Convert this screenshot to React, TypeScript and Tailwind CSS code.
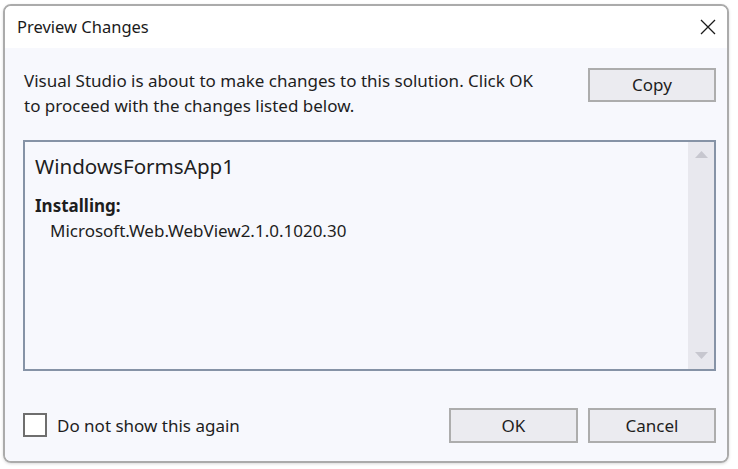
import React from "react";

export default function App() {
  const font = { fontFamily: '"Noto Sans", "Open Sans", sans-serif' };
  return (
    <div className="w-[738px] h-[469px] bg-white overflow-hidden" style={font}>
      <div className="ml-[3px] mt-[4px] w-[726px] h-[459px] border-2 border-[#ababab] rounded-[8px] overflow-hidden flex flex-col shadow-[0_1px_3px_rgba(0,0,0,0.15)]">
        {/* Title bar */}
        <div className="h-[42px] bg-white flex items-center justify-between pl-[12px] pr-[10px] shrink-0">
          <span className="text-[16.5px] text-[#1b1b1b] leading-none pt-[1px]">Preview Changes</span>
          <svg width="16" height="16" viewBox="0 0 16 16" className="mr-[1px]">
            <path d="M1 1 L15 15 M15 1 L1 15" stroke="#1b1b1b" strokeWidth="1.3" />
          </svg>
        </div>
        {/* Body */}
        <div className="flex-1 bg-[#f7f8fd] flex flex-col pl-[18px] pr-[11px] pt-[20px] text-[#1e1e1e]">
          <div className="flex justify-between items-start">
            <p className="text-[17px] leading-[25px] ml-[1px]">
              Visual Studio is about to make changes to this solution. Click OK
              <br />
              to proceed with the changes listed below.
            </p>
            <button className="w-[128px] h-[34px] border-2 border-[#adadad] bg-[#ebebf0] text-[17px] text-[#1e1e1e] shrink-0">
              Copy
            </button>
          </div>
          <div className="mt-[22px] h-[231px] border-2 border-[#8693a6] flex">
            <div className="flex-1 pl-[10px] pt-[10px]">
              <div className="text-[20.6px] leading-[28px]">WindowsFormsApp1</div>
              <div className="text-[17px] font-bold leading-[24px] mt-[14px]">Installing:</div>
              <div className="text-[17px] leading-[25px] pl-[15px]">Microsoft.Web.WebView2.1.0.1020.30</div>
            </div>
            <div className="w-[26px] bg-[#e8e8ee] flex flex-col items-center justify-between pt-[9px] pb-[10px]">
              <svg width="13" height="7" viewBox="0 0 13 7">
                <path d="M0 7 L6.5 0 L13 7 Z" fill="#c7c7cf" />
              </svg>
              <svg width="13" height="7" viewBox="0 0 13 7">
                <path d="M0 0 L6.5 7 L13 0 Z" fill="#c7c7cf" />
              </svg>
            </div>
          </div>
          <div className="mt-[37px] flex items-center justify-between">
            <label className="flex items-center gap-[10px]">
              <span className="w-[24px] h-[24px] border-2 border-[#6e6e6e] bg-white inline-block -mt-[2px]" />
              <span className="text-[17px]">Do not show this again</span>
            </label>
            <div className="flex gap-[10px]">
              <button className="w-[129px] h-[35px] border-2 border-[#adadad] bg-[#ebebf0] text-[17px] text-[#1e1e1e]">OK</button>
              <button className="w-[128px] h-[35px] border-2 border-[#adadad] bg-[#ebebf0] text-[17px] text-[#1e1e1e]">Cancel</button>
            </div>
          </div>
        </div>
      </div>
    </div>
  );
}
